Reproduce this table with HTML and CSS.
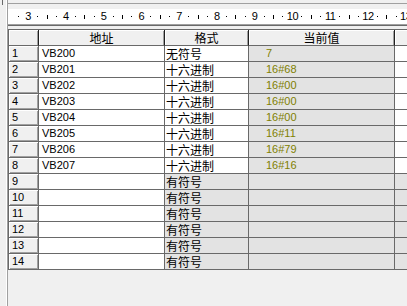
FILE: index.html
```html
<!DOCTYPE html>
<html>
<head>
<meta charset="utf-8">
<link rel="stylesheet" href="styles.css">
</head>
<body>
<div class="frame">
  <div class="side"><div class="side-mark"></div></div>
  <div class="main">
    <div class="topline"></div>
    <div class="ruler">
      <span class="q"><i class="dot"></i></span><span class="q num">3</span><span class="q"><i class="dot"></i></span><span class="q"><i class="tick"></i></span><span class="q"><i class="dot"></i></span>
      <span class="q num">4</span><span class="q"><i class="dot"></i></span><span class="q"><i class="tick"></i></span><span class="q"><i class="dot"></i></span>
      <span class="q num">5</span><span class="q"><i class="dot"></i></span><span class="q"><i class="tick"></i></span><span class="q"><i class="dot"></i></span>
      <span class="q num">6</span><span class="q"><i class="dot"></i></span><span class="q"><i class="tick"></i></span><span class="q"><i class="dot"></i></span>
      <span class="q num">7</span><span class="q"><i class="dot"></i></span><span class="q"><i class="tick"></i></span><span class="q"><i class="dot"></i></span>
      <span class="q num">8</span><span class="q"><i class="dot"></i></span><span class="q"><i class="tick"></i></span><span class="q"><i class="dot"></i></span>
      <span class="q num">9</span><span class="q"><i class="dot"></i></span><span class="q"><i class="tick"></i></span><span class="q"><i class="dot"></i></span>
      <span class="q num">10</span><span class="q"><i class="dot"></i></span><span class="q"><i class="tick"></i></span><span class="q"><i class="dot"></i></span>
      <span class="q num">11</span><span class="q"><i class="dot"></i></span><span class="q"><i class="tick"></i></span><span class="q"><i class="dot"></i></span>
      <span class="q num">12</span><span class="q"><i class="dot"></i></span><span class="q"><i class="tick"></i></span><span class="q"><i class="dot"></i></span>
      <span class="q num">13</span>
    </div>
    <div class="ruler-base"></div>
    <div class="sheet">
      <div class="c hd"></div><div class="c hd">地址</div><div class="c hd">格式</div><div class="c hd">当前值</div><div class="c hd"></div>

      <div class="c rn">1</div><div class="c addr">VB200</div><div class="c fmt">无符号</div><div class="c val">7</div><div class="c ex"></div>
      <div class="c rn">2</div><div class="c addr">VB201</div><div class="c fmt">十六进制</div><div class="c val">16#68</div><div class="c ex"></div>
      <div class="c rn">3</div><div class="c addr">VB202</div><div class="c fmt">十六进制</div><div class="c val">16#00</div><div class="c ex"></div>
      <div class="c rn">4</div><div class="c addr">VB203</div><div class="c fmt">十六进制</div><div class="c val">16#00</div><div class="c ex"></div>
      <div class="c rn">5</div><div class="c addr">VB204</div><div class="c fmt">十六进制</div><div class="c val">16#00</div><div class="c ex"></div>
      <div class="c rn">6</div><div class="c addr">VB205</div><div class="c fmt">十六进制</div><div class="c val">16#11</div><div class="c ex"></div>
      <div class="c rn">7</div><div class="c addr">VB206</div><div class="c fmt">十六进制</div><div class="c val">16#79</div><div class="c ex"></div>
      <div class="c rn">8</div><div class="c addr">VB207</div><div class="c fmt">十六进制</div><div class="c val">16#16</div><div class="c ex"></div>
      <div class="c rn">9</div><div class="c addr"></div><div class="c fmt off">有符号</div><div class="c val"></div><div class="c ex off"></div>
      <div class="c rn">10</div><div class="c addr"></div><div class="c fmt off">有符号</div><div class="c val"></div><div class="c ex off"></div>
      <div class="c rn">11</div><div class="c addr"></div><div class="c fmt off">有符号</div><div class="c val"></div><div class="c ex off"></div>
      <div class="c rn">12</div><div class="c addr"></div><div class="c fmt off">有符号</div><div class="c val"></div><div class="c ex off"></div>
      <div class="c rn">13</div><div class="c addr"></div><div class="c fmt off">有符号</div><div class="c val"></div><div class="c ex off"></div>
      <div class="c rn">14</div><div class="c addr"></div><div class="c fmt off">有符号</div><div class="c val"></div><div class="c ex off"></div>
    </div>
  </div>
</div>
</body>
</html>
```
FILE: styles.css
```css
html, body {
  margin: 0;
  padding: 0;
  background: #f0f0f0;
}
body {
  font-family: "Liberation Sans", "Noto Sans CJK SC", sans-serif;
  font-size: 11px;
  color: #000;
}
.frame {
  display: flex;
  width: 407px;
  height: 306px;
  overflow: hidden;
}
.side {
  width: 7px;
  flex: none;
  border-right: 1px solid #a0a0a0;
  box-shadow: inset -1px 0 0 #ffffff;
  position: relative;
}
.side-mark {
  margin-left: 2px;
  width: 1px;
  height: 5px;
  background: #696969;
}
.main {
  flex: 1;
  min-width: 0;
  overflow: hidden;
}
.topline {
  height: 3px;
  border-bottom: 1px solid #a0a0a0;
  margin-bottom: 5px;
}
.ruler {
  height: 15px;
  background: #ffffff;
  display: flex;
  align-items: center;
  padding-left: 6px;
  white-space: nowrap;
  overflow: hidden;
}
.q {
  flex: none;
  width: 9.45px;
  display: flex;
  justify-content: center;
  align-items: center;
  height: 15px;
  font-size: 11px;
  line-height: 15px;
}
.num {
  letter-spacing: -0.5px;
}
.dot {
  display: block;
  width: 1px;
  height: 1px;
  background: #000;
}
.tick {
  display: block;
  width: 1px;
  height: 4px;
  background: #000;
}
.ruler-base {
  height: 0;
  border-top: 1px solid #a0a0a0;
  border-bottom: 1px solid #696969;
  margin-bottom: 3px;
}
.sheet {
  display: grid;
  grid-template-columns: 30px 126px 84px 146px 60px;
  grid-auto-rows: 16px;
  border-top: 1px solid #696969;
  border-left: 1px solid #696969;
  width: max-content;
}
.c {
  box-sizing: border-box;
  border-right: 1px solid #696969;
  border-bottom: 1px solid #696969;
  line-height: 15px;
  white-space: nowrap;
  overflow: hidden;
}
.hd {
  background: #f0f0f0;
  text-align: center;
  font-family: "Noto Sans CJK SC", sans-serif;
  font-size: 12px;
  border-right-color: #202020;
  box-shadow: inset 1px 1px 0 #ffffff, inset -1px 0 0 #a0a0a0;
}
.rn {
  background: #f0f0f0;
  padding-left: 3px;
  box-shadow: inset 1px 1px 0 #ffffff, inset -1px -1px 0 #a0a0a0;
}
.addr {
  background: #ffffff;
  padding-left: 3px;
}
.fmt {
  background: #ffffff;
  padding-left: 1px;
  font-family: "Noto Sans CJK SC", sans-serif;
  font-size: 12px;
}
.val {
  background: #e3e3e3;
  color: #808000;
  padding-left: 17px;
}
.ex {
  background: #ffffff;
}
.off {
  background: #e3e3e3;
}
```
